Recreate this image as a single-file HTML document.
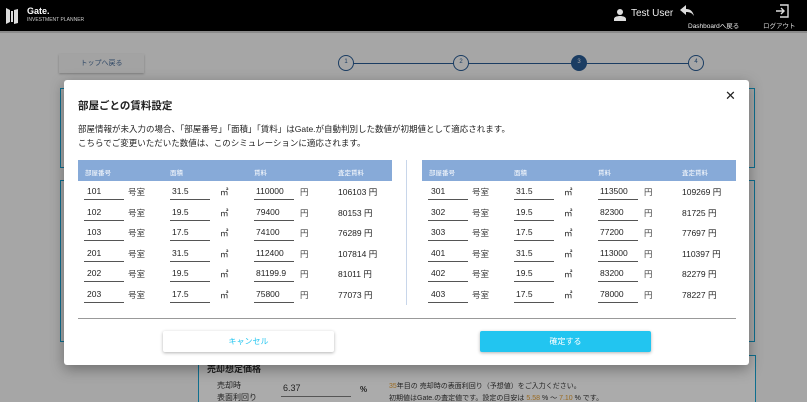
<!DOCTYPE html>
<html><head><meta charset="utf-8"><style>
*{margin:0;padding:0;box-sizing:border-box}
html,body{width:807px;height:402px;overflow:hidden}
body{background:#a6a6a6;font-family:"Liberation Sans","Noto Sans CJK JP",sans-serif;position:relative;color:#222}
.a{position:absolute}
.hdr{left:0;top:0;width:807px;height:31px;background:#000}
.sep{left:0;top:31px;width:807px;height:2px;background:#8a8a8a}
.modal{left:64px;top:80px;width:685px;height:285px;background:#fff;border-radius:3px;box-shadow:0 4px 14px rgba(0,0,0,.35)}
.th{height:21px;background:#87aad8;color:#fff;font-size:6.5px;top:160px}
.th span{position:absolute;top:7px}
.t{font-size:8.5px;color:#222;white-space:nowrap}
.u{height:1px;background:#555}
.btn{height:21px;border-radius:2px;font-size:8px;text-align:center;line-height:21px;box-shadow:0 1px 3px rgba(0,0,0,.3)}
</style></head><body>
<div class="a hdr"></div><div class="a sep"></div>
<svg class="a" style="left:5px;top:7px" width="14" height="18" viewBox="0 0 14 18"><path d="M1 1v16l4-2V3z M13 2v14l-4 1V3z M6 4h2v11H6z" fill="#ddd"/></svg>
<div class="a" style="left:27px;top:6px;color:#fff;font-size:9px;font-weight:bold">Gate.</div>
<div class="a" style="left:27px;top:17px;color:#ccc;font-size:5px">INVESTMENT PLANNER</div>
<svg class="a" style="left:614px;top:8px" width="12" height="13" viewBox="0 0 12 13"><circle cx="6" cy="4" r="3" fill="#ddd"/><path d="M0 13v-2c0-2 3-3 6-3s6 1 6 3v2z" fill="#ddd"/></svg>
<div class="a" style="left:631px;top:8px;color:#eee;font-size:10px">Test User</div>
<svg class="a" style="left:680px;top:5px" width="14" height="11" viewBox="0 0 14 11"><path d="M6 0L0 5l6 5V7c4 0 6 1 8 4-1-4-3-7-8-7z" fill="#ddd"/></svg>
<div class="a" style="left:688px;top:20px;color:#eee;font-size:6.5px">Dashboardへ戻る</div>
<svg class="a" style="left:775px;top:4px" width="14" height="14" viewBox="0 0 14 14"><path d="M5 1h8v12H5M1 7h8M6 4l3 3-3 3" fill="none" stroke="#ddd" stroke-width="1.4"/></svg>
<div class="a" style="left:763px;top:20px;color:#ddd;font-size:6.5px">ログアウト</div>

<div class="a" style="left:59px;top:54px;width:85px;height:19px;background:#a3a3a3;box-shadow:0 1px 2px rgba(0,0,0,.25);font-size:7px;color:#2e4766;text-align:center;line-height:19px">トップへ戻る</div>
<div class="a" style="left:345px;top:63px;width:350px;height:1px;background:#1b3d63"></div>
<div class="a" style="left:338px;top:55px;width:16px;height:16px;border:1.5px solid #1b3d63;border-radius:50%;background:#a6a6a6;font-size:6px;text-align:center;line-height:13px;color:#1b3d63">1</div>
<div class="a" style="left:453px;top:55px;width:16px;height:16px;border:1.5px solid #1b3d63;border-radius:50%;background:#a6a6a6;font-size:6px;text-align:center;line-height:13px;color:#1b3d63">2</div>
<div class="a" style="left:571px;top:55px;width:16px;height:16px;border:1.5px solid #1b3d63;border-radius:50%;background:#1b3d63;font-size:6px;text-align:center;line-height:13px;color:#aaa">3</div>
<div class="a" style="left:688px;top:55px;width:16px;height:16px;border:1.5px solid #1b3d63;border-radius:50%;background:#a6a6a6;font-size:6px;text-align:center;line-height:13px;color:#1b3d63">4</div>

<div class="a" style="left:60px;top:88px;width:695px;height:80px;border:1px solid #0e6f8f"></div>
<div class="a" style="left:60px;top:180px;width:695px;height:162px;border:1px solid #0e6f8f"></div>
<div class="a" style="left:198px;top:355px;width:558px;height:60px;border:1px solid #0e6f8f;background:#ababab"></div>
<div class="a" style="left:207px;top:362px;font-size:9px;font-weight:bold">売却想定価格</div>
<div class="a" style="left:217px;top:380px;font-size:8px">売却時</div>
<div class="a" style="left:217px;top:392px;font-size:8px">表面利回り</div>
<div class="a" style="left:283px;top:383px;font-size:9px">6.37</div>
<div class="a" style="left:281px;top:396px;width:70px;height:1px;background:#555"></div>
<div class="a" style="left:360px;top:385px;font-size:8px;font-weight:bold">%</div>
<div class="a" style="left:389px;top:381px;font-size:7px"><span style="color:#9a6a20">35</span>年目の 売却時の表面利回り（予想値）をご入力ください。</div>
<div class="a" style="left:389px;top:393px;font-size:7px">初期値はGate.の査定値です。設定の目安は <span style="color:#9a6a20">5.58</span> % 〜 <span style="color:#9a6a20">7.10</span> % です。</div>

<div class="a modal"></div>
<div class="a" style="left:78px;top:98px;font-size:10.5px;font-weight:bold">部屋ごとの賃料設定</div>
<div class="a" style="left:725px;top:88px;font-size:13px">✕</div>
<div class="a t" style="left:78px;top:123px;font-size:8.5px">部屋情報が未入力の場合、「部屋番号」「面積」「賃料」はGate.が自動判別した数値が初期値として適応されます。</div>
<div class="a t" style="left:78px;top:137px;font-size:8.5px">こちらでご変更いただいた数値は、このシミュレーションに適応されます。</div>

<div class="a th" style="left:78px;width:314px"><span style="left:7px">部屋番号</span><span style="left:92px">面積</span><span style="left:176px">賃料</span><span style="left:260px">査定賃料</span></div>
<div class="a th" style="left:422px;width:314px"><span style="left:7px">部屋番号</span><span style="left:92px">面積</span><span style="left:176px">賃料</span><span style="left:260px">査定賃料</span></div>
<div class="a" style="left:406px;top:160px;width:1px;height:145px;background:#c8d6ea"></div>
<div class="a" style="left:78px;top:318px;width:658px;height:1px;background:#999"></div>

<div id="rows"></div>
<script>
var L=[["101","31.5","110000","106103"],["102","19.5","79400","80153"],["103","17.5","74100","76289"],["201","31.5","112400","107814"],["202","19.5","81199.9","81011"],["203","17.5","75800","77073"]];
var R=[["301","31.5","113500","109269"],["302","19.5","82300","81725"],["303","17.5","77200","77697"],["401","31.5","113000","110397"],["402","19.5","83200","82279"],["403","17.5","78000","78227"]];
var h="";
function add(d,x0){for(var i=0;i<6;i++){var y=186+i*20.6;var r=d[i];
h+='<div class="a t" style="left:'+(x0+9)+'px;top:'+y+'px">'+r[0]+'</div>';
h+='<div class="a u" style="left:'+(x0+6)+'px;top:'+(y+13)+'px;width:40px"></div>';
h+='<div class="a t" style="left:'+(x0+50)+'px;top:'+y+'px;color:#444">号室</div>';
h+='<div class="a t" style="left:'+(x0+94)+'px;top:'+y+'px">'+r[1]+'</div>';
h+='<div class="a u" style="left:'+(x0+92)+'px;top:'+(y+13)+'px;width:40px"></div>';
h+='<div class="a t" style="left:'+(x0+142)+'px;top:'+y+'px">㎡</div>';
h+='<div class="a t" style="left:'+(x0+178)+'px;top:'+y+'px;width:38px;overflow:hidden">'+r[2]+'</div>';
h+='<div class="a u" style="left:'+(x0+176)+'px;top:'+(y+13)+'px;width:40px"></div>';
h+='<div class="a t" style="left:'+(x0+222)+'px;top:'+y+'px;color:#444">円</div>';
h+='<div class="a t" style="left:'+(x0+260)+'px;top:'+y+'px">'+r[3]+' 円</div>';}}
add(L,78);add(R,422);
document.getElementById("rows").innerHTML=h;
</script>
<div class="a btn" style="left:163px;top:331px;width:171px;background:#fff;color:#22c5f0">キャンセル</div>
<div class="a btn" style="left:480px;top:331px;width:171px;background:#22c5f0;color:#fff">確定する</div>
</body></html>
